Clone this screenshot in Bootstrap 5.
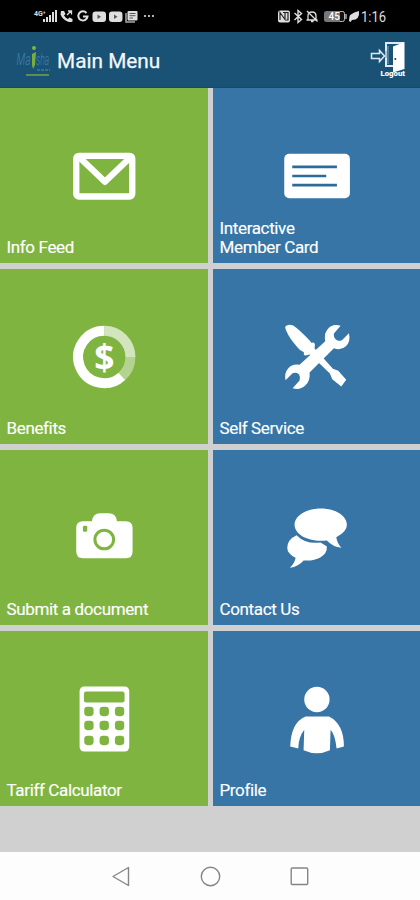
<!DOCTYPE html>
<html lang="en">
<head>
<meta charset="utf-8">
<meta name="viewport" content="width=device-width, initial-scale=1">
<title>Main Menu</title>
<link href="https://cdn.jsdelivr.net/npm/bootstrap@5.3.0/dist/css/bootstrap.min.css" rel="stylesheet">
<style>
body{font-family:Roboto,"Liberation Sans",sans-serif;background:#d0d0d0;height:900px;overflow:hidden}
svg{display:block;flex:none}
.status{height:32px;background:#000}
.appbar{height:56px;background:#1a5276;border-bottom:1px solid #1c4a63}
.apptitle{font-size:20.8px;line-height:28px;padding-top:2px;color:#f4f8fb;-webkit-text-stroke:.25px #f4f8fb}
.menu{display:grid;grid-template-columns:207.5px 1fr;grid-auto-rows:175px;gap:6px 5.5px}
.tile{display:grid;color:#fff;text-decoration:none}
.tile>*{grid-area:1/1}
.tile svg{place-self:center;fill:#fff}
.tile span{align-self:end;font-size:17px;letter-spacing:-.36px;line-height:19px;padding:0 6.500px 6px;-webkit-text-stroke:.15px #fff}
.green{background:#80b441;--c:#80b441}
.blue{background:#3675a5;--c:#3675a5}
.cut{fill:var(--c)}
.sysnav{height:48px;background:#fdfdfd}
</style>
<script src="https://cdn.jsdelivr.net/npm/bootstrap@5.3.0/dist/js/bootstrap.bundle.min.js"></script>
</head>
<body class="d-flex flex-column">
<div class="status d-flex">
<svg width="420" height="32" viewBox="0 0 420 32" fill="#dedede" font-family="Roboto, sans-serif">
  <text x="34" y="16" font-size="7" font-weight="700">4G⁺</text>
  <path d="M43 22v-3h2v3zM46 22v-5h2v5zM49 22v-7h2v7zM52 22v-10h2v10zM55 22v-12h2v12z"/>
  <path d="M61 11l3 0 1.500 3-1.500 1.500q1.500 2.500 4 3.500l1.500-1.500 3 1.500v2.500q-2 1-5 0-5-2-7-7z"/>
  <path d="M67 15l4-4M68 11h3.500v3.500" fill="none" stroke="#dedede" stroke-width="1.300"/>
  <path d="M86.500 13a4.600 4.600 0 1 0 1 3.500h-4.500" fill="none" stroke="#dedede" stroke-width="2"/>
  <rect x="92.500" y="11.500" width="13.500" height="10.500" rx="3"/><path d="M97.500 14.500l3.500 2.200-3.500 2.200z" fill="#555"/>
  <rect x="109" y="11.500" width="13.500" height="10.500" rx="3"/><path d="M114 14.500l3.500 2.200-3.500 2.200z" fill="#555"/>
  <path d="M126 13v9h9" fill="none" stroke="#aaa" stroke-width="1.500"/><rect x="127.500" y="11" width="10" height="9.500" rx="1"/>
  <path d="M129.500 13.500h6M129.500 15.700h6M129.500 18h3.500" stroke="#555"/>
  <circle cx="145" cy="16" r="1.100"/><circle cx="149" cy="16" r="1.100"/><circle cx="153" cy="16" r="1.100"/>
  <rect x="278" y="10.500" width="12" height="12" rx="2"/><path d="M280 20v-7.500l5 7V13M283 12.500h5v7.500h-2" fill="none" stroke="#222" stroke-width="1.200"/>
  <path d="M294.500 13l7 6.500-3.500 3v-12l3.500 3-7 6.500" fill="none" stroke="#dedede" stroke-width="1.400"/>
  <path d="M308 20v-4q0-4 4-4t4 4v4zM306.500 20h11M311 21.500h2.500M307 11l10.500 10.500" fill="none" stroke="#dedede" stroke-width="1.300"/>
  <rect x="324" y="11" width="20" height="11" rx="2.500" fill="#777"/><path d="M340 11.500h2.500q2 0 2 2v6q0 2-2 2H340" fill="#111" stroke="#bbb"/><path d="M346 14v5" stroke="#aaa" stroke-width="1.500"/>
  <text x="328.500" y="20" font-size="10" font-weight="500" fill="#fff">45</text>
  <path d="M349 21q-1-8 10-10 1 9-7 9l-1.500 2z"/>
  <text x="361" y="21.500" font-size="15" textLength="25" lengthAdjust="spacingAndGlyphs">1:16</text>
</svg>
</div>
<header class="appbar d-flex align-items-center">
<svg width="57" height="56" viewBox="0 32 57 56" font-family="Roboto, sans-serif">
  <text x="16.500" y="65" font-size="17" font-style="italic" font-weight="300" fill="#3d83b0" textLength="14" lengthAdjust="spacingAndGlyphs">Ma<tspan fill="#78ad3c"></tspan></text>
  <text x="36" y="65" font-size="16" font-style="italic" font-weight="300" fill="#3d83b0" transform="translate(36 0) scale(.53 1) translate(-36 0)">sha</text>
  <path d="M32 54l4-2-1 13-2 4-1-4z" fill="#78ad3c"/><circle cx="34" cy="48" r="2" fill="#80b441"/>
  <path d="M37 70h13" stroke="#4b8db7" stroke-dasharray="3 1"/><path d="M26 75h23" stroke="#80a940" stroke-width="1.400"/>
</svg>
<h1 class="apptitle m-0 flex-grow-1 fw-normal">Main Menu</h1>
<svg width="56" height="56" viewBox="364 32 56 56">
  <path d="M386 51v-8h18M386 58v8h9" fill="none" stroke="#dceaf3" stroke-width="2"/><path d="M388 46v18" stroke="#7fa5bd"/>
  <path d="M386 50v9" stroke="#dceaf3" stroke-width="1.500"/>
  <path d="M371.500 53.500h8v-3l5 5.500-5 5.500v-3h-8z" fill="#1a5276" stroke="#dceaf3" stroke-width="1.500"/>
  <path d="M393 46.500l11.500-4.500v27l-11.500 3.500z" fill="#fff"/><circle cx="395.300" cy="59" r="1" fill="#1a3f58"/>
  <text x="380.500" y="76" font-family="Roboto, sans-serif" font-size="6.500" font-weight="900" fill="#fff" textLength="24.500" lengthAdjust="spacingAndGlyphs">Logout</text>
</svg>
</header>
<main class="menu flex-grow-1">
<a class="tile green" href="#"><svg width="80" height="80"><g transform="translate(-63.75 -5.500) scale(.33333)" fill="none" stroke="#fff" stroke-width="19">
  <rect x="228" y="76" width="168" height="122" rx="8"/><path d="M238 81l76 73 76-73" stroke-width="19" stroke-linejoin="round"/></g></svg><span>Info Feed</span></a>
<a class="tile blue" href="#"><svg width="80" height="80"><g transform="translate(-66.750 -5.500) scale(.33333)">
  <rect x="222" y="70" width="197" height="133" rx="15"/><path d="M246 109h134M246 136.500h102M246 164h134" stroke="#2c6c9b" stroke-width="8"/></g></svg><span>Interactive<br>Member Card</span></a>
<a class="tile green" href="#"><svg width="80" height="80"><g transform="translate(-63.75 -6.500) scale(.33333)">
  <g fill="none" stroke="#fff" stroke-width="30"><path d="M312 61a78.500 78.500 0 1 0 53 136.500"/><path d="M312 61a78.500 78.500 0 0 1 78.500 78.500" opacity=".65"/><path d="M390.500 139.500a78.500 78.500 0 0 1-25.500 58" opacity=".42"/></g>
  <text x="312" y="178" text-anchor="middle" font-family="Open Sans, sans-serif" font-weight="700" font-size="106">$</text></g></svg><span>Benefits</span></a>
<a class="tile blue" href="#"><svg width="80" height="80"><g transform="translate(-66.750 -6.500) scale(.33333)">
  <path d="M226 47q8-8 23-2 18 12 50 46l4 6q10-3 11 4l-1 13 9 10 46 51 16 6 24 27-15 20-27-22-7-17-50-48-10-9-13 3q-7 0-5-10-12-4-19-14-25-28-34-50-5-14-2-14z"/>
  <path d="M391 46q-26-8-41 13-9 13-5 33l-77 71q-20-5-34 10-13 15-8 36l21-21q11-3 19 3 6 9 2 19l-21 23q22 7 38-8 16-14 13-39l73-73q21 8 36-6 15-15 9-39l-21 21q-11 5-18-2-8-7-6-18z"/></g></svg><span>Self Service</span></a>
<a class="tile green" href="#"><svg width="80" height="80"><g transform="translate(-63.75 -7.500) scale(.33333)">
  <path d="M248 92h27q3-24 25-24h25q23 0 25 24h27q20 0 20 20v71q0 20-20 20H248q-20 0-20-20v-71q0-20 20-20z"/><rect class="cut" x="248" y="106" width="13" height="18" rx="4"/><circle cx="312" cy="147" r="28" fill="none" stroke="#80b441" stroke-width="9"/></g></svg><span>Submit a document</span></a>
<a class="tile blue" href="#"><svg width="80" height="80"><g transform="translate(-66.750 -7.500) scale(.33333)">
  <path d="M259 134q-28 13-28 38 0 18 25 30-2 15-17 30 26-4 41-22 31 2 50-9 21-12 20-33l-19-12q-45 6-72-22z"/>
  <path d="M332 54c-44 0-79 22-79 49s35 48 79 48q9 0 18-1 17 19 44 22-13-13-16-32 32-15 32-37c0-27-34-49-78-49z"/></g></svg><span>Contact Us</span></a>
<a class="tile green" href="#"><svg width="80" height="80"><g transform="translate(-63.75 -8.500) scale(.33333)">
  <rect x="238" y="48" width="149" height="195" rx="14"/><g class="cut"><rect x="251" y="63" width="122" height="33" rx="7"/>
  <rect x="252" y="109" width="28" height="28" rx="10"/><rect x="298" y="109" width="28" height="28" rx="10"/><rect x="344" y="109" width="28" height="28" rx="10"/>
  <rect x="252" y="151" width="28" height="28" rx="10"/><rect x="298" y="151" width="28" height="28" rx="10"/><rect x="344" y="151" width="28" height="28" rx="10"/>
  <rect x="252" y="196" width="28" height="28" rx="10"/><rect x="298" y="196" width="28" height="28" rx="10"/><rect x="344" y="196" width="28" height="28" rx="10"/></g></g></svg><span>Tariff Calculator</span></a>
<a class="tile blue" href="#"><svg width="80" height="80"><g transform="translate(-66.750 -8.500) scale(.33333)">
  <circle cx="320" cy="87" r="38"/><path d="M286 138h70q45 22 45 90l-22 6q-4-40-18-56l-2 61q-39 18-79 0l2-61q-17 22-18 56l-24-6q2-72 46-90z"/></g></svg><span>Profile</span></a>
</main>
<footer class="sysnav d-flex">
<svg width="420" height="48" viewBox="0 852 420 48" fill="none" stroke="#858585" stroke-width="1.400" stroke-linejoin="round"><path d="M113 876.500l15.500-9v18z"/><circle cx="210.500" cy="876.500" r="9.200"/><rect x="291.200" y="868" width="16.500" height="16.500" rx="1"/></svg>
</footer>
</body>
</html>
